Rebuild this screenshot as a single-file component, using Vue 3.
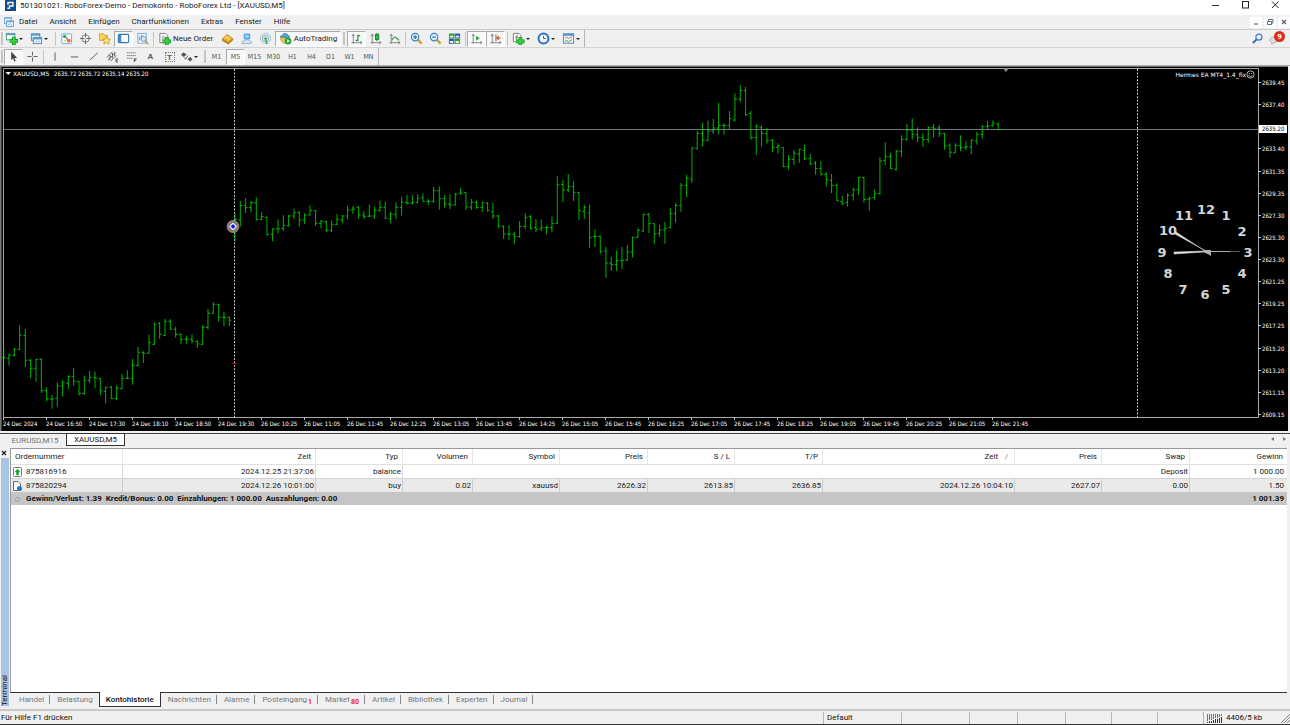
<script setup>
const menus = ['Datei', 'Ansicht', 'Einfügen', 'Chartfunktionen', 'Extras', 'Fenster', 'Hilfe']

const timeframes = ['M1', 'M5', 'M15', 'M30', 'H1', 'H4', 'D1', 'W1', 'MN']

// Bars are [high, low, open, close] in thirds of a pixel, each block with its own vertical base.
const blocks = [
  [570, [
    [468, 506, 503, 503], [490, 527, 505, 496], [474, 500, 496, 478], [406, 480, 478, 436], [417, 531, 436, 511],
    [507, 564, 511, 535], [507, 575, 535, 508], [505, 609, 508, 602], [592, 634, 602, 627], [614, 656, 627, 627],
    [577, 650, 625, 588], [570, 620, 588, 578], [556, 597, 580, 559], [534, 587, 559, 574], [573, 617, 574, 611],
    [557, 615, 611, 571], [543, 579, 571, 562], [545, 595, 562, 564], [564, 615, 565, 602], [590, 640, 604, 592],
    [588, 627, 592, 626], [586, 630, 626, 594], [552, 597, 596, 565], [541, 567, 565, 565], [507, 584, 566, 526],
    [471, 530, 526, 487], [484, 519, 487, 490], [434, 492, 490, 458], [397, 465, 463, 403], [397, 446, 400, 433],
    [387, 438, 436, 394], [388, 419, 394, 418], [410, 443, 418, 433], [430, 462, 433, 449], [437, 462, 447, 448],
    [433, 460, 448, 453], [450, 473, 455, 462], [405, 465, 463, 412], [357, 419, 412, 370], [336, 371, 370, 343],
    [342, 396, 343, 382], [366, 408, 382, 382], [380, 408, 382, 391], [70, 155, 138, 88], [33, 110, 90, 47],
    [24, 70, 47, 53], [33, 67, 53, 38], [22, 92, 38, 88], [66, 90, 88, 80], [80, 137, 82, 133],
    [115, 154, 133, 117], [88, 130, 117, 116], [76, 123, 116, 107], [75, 110, 107, 78], [56, 88, 78, 68],
    [63, 110, 68, 90], [70, 102, 90, 75], [46, 76, 75, 62], [60, 108, 62, 100]
  ]],
  [480, [
    [180, 205, 190, 184], [182, 216, 185, 211], [182, 216, 211, 193], [163, 195, 193, 178], [165, 190, 180, 168],
    [137, 179, 168, 150], [138, 162, 150, 147], [138, 177, 142, 165], [153, 177, 165, 169], [134, 171, 169, 168],
    [140, 177, 168, 151], [122, 155, 151, 142], [126, 177, 142, 175], [156, 190, 177, 163], [127, 177, 163, 142],
    [111, 167, 142, 127], [105, 133, 127, 130], [105, 133, 130, 127], [103, 130, 127, 115], [101, 125, 113, 124],
    [117, 135, 124, 124], [81, 128, 124, 92], [79, 149, 92, 116], [105, 143, 116, 132], [103, 147, 132, 135],
    [99, 137, 135, 103], [83, 104, 101, 99], [97, 150, 98, 141], [117, 150, 141, 127], [122, 147, 127, 142],
    [125, 156, 142, 127], [126, 155, 130, 151], [129, 177, 155, 168], [165, 205, 168, 197], [196, 237, 199, 222],
    [196, 240, 222, 223], [215, 253, 223, 230], [183, 233, 230, 199], [159, 208, 199, 172], [165, 208, 170, 205],
    [177, 216, 203, 208], [179, 213, 207, 202], [197, 223, 203, 202], [170, 216, 203, 191], [48, 192, 190, 74],
    [59, 126, 73, 90], [42, 96, 90, 79], [63, 123, 79, 97], [96, 180, 97, 151], [134, 177, 154, 142],
    [134, 263, 159, 232], [208, 261, 230, 229], [227, 281, 229, 275], [261, 354, 273, 309], [290, 333, 309, 314],
    [272, 333, 314, 302], [261, 327, 303, 301], [255, 303, 300, 276]
  ]],
  [210, [
    [500, 563, 546, 502], [474, 503, 502, 481], [430, 486, 483, 433], [429, 489, 433, 461], [460, 523, 461, 492],
    [465, 500, 490, 480], [456, 521, 480, 475], [414, 475, 473, 430], [399, 458, 430, 406], [339, 426, 406, 346],
    [315, 381, 346, 325], [232, 339, 327, 234], [183, 239, 235, 190], [158, 230, 190, 211], [152, 213, 211, 183],
    [147, 192, 183, 174], [99, 192, 174, 166], [160, 194, 166, 167], [123, 180, 166, 146], [71, 155, 150, 87],
    [45, 96, 87, 62], [51, 137, 62, 134], [123, 209, 130, 203], [162, 255, 203, 170], [165, 230, 173, 190],
    [174, 221, 191, 211], [207, 247, 211, 232], [220, 251, 232, 228], [231, 291, 233, 290], [255, 299, 290, 268],
    [240, 285, 268, 250], [237, 279, 252, 238], [225, 270, 241, 266], [252, 285, 266, 282], [273, 314, 280, 296],
    [273, 317, 296, 313], [306, 350, 314, 329], [312, 369, 331, 346], [340, 395, 346, 391], [378, 406, 395, 401],
    [370, 410, 398, 376], [353, 392, 375, 359], [321, 375, 358, 323], [321, 398, 322, 388], [380, 422, 388, 384],
    [358, 389, 382, 371], [261, 374, 371, 273], [217, 285, 272, 260], [249, 297, 260, 296], [240, 302, 298, 243],
    [196, 261, 244, 208], [162, 212, 208, 180], [146, 209, 180, 193], [172, 217, 194, 202], [190, 231, 203, 209],
    [169, 219, 208, 173], [162, 203, 173, 176], [165, 201, 174, 191], [189, 239, 191, 228], [220, 263, 226, 247],
    [220, 249, 248, 226], [196, 243, 227, 232], [214, 240, 233, 230], [208, 252, 231, 211], [186, 224, 213, 193],
    [165, 206, 193, 170], [153, 178, 169, 168], [151, 170, 167, 159], [159, 180, 162, 179]
  ]]
]

const chartTop = 66
const barStep = 16.13
let index = 0
let barPath = ''
for (const [base, bars] of blocks) {
  for (const [high, low, open, close] of bars) {
    const x = Math.round(11 + barStep * index)
    const y = (v) => v + base - chartTop * 3
    barPath += `M${x} ${y(high)}V${y(low)}M${x - 6} ${y(open)}H${x}M${x} ${y(close)}H${x + 6}`
    index += 1
  }
}

const prices = ['2639.45', '2637.40', '2635.40', '2633.40', '2631.35', '2629.35', '2627.30', '2625.30', '2623.30',
  '2621.25', '2619.25', '2617.25', '2615.20', '2613.20', '2611.15', '2609.15']
const priceAxis = prices.map((label, i) => ({ label, y: Math.round(17 + i * 22.13) })).filter((p) => p.label !== '2635.40')

const times = ['24 Dec 2024', '24 Dec 16:50', '24 Dec 17:30', '24 Dec 18:10', '24 Dec 18:50', '24 Dec 19:30',
  '26 Dec 10:25', '26 Dec 11:05', '26 Dec 11:45', '26 Dec 12:25', '26 Dec 13:05', '26 Dec 13:45', '26 Dec 14:25',
  '26 Dec 15:05', '26 Dec 15:45', '26 Dec 16:25', '26 Dec 17:05', '26 Dec 17:45', '26 Dec 18:25', '26 Dec 19:05',
  '26 Dec 19:45', '26 Dec 20:25', '26 Dec 21:05', '26 Dec 21:45']
const timeAxis = times.map((label, i) => ({ label, x: 3 + i * 43 }))

const clock = [
  [12, 1206, 143], [1, 1226, 149], [2, 1242, 165], [3, 1248, 186], [4, 1242, 207], [5, 1226, 223],
  [6, 1205, 228], [7, 1183, 223], [8, 1168, 207], [9, 1162, 186], [10, 1168, 164], [11, 1184, 149]
]

const columns = ['Ordernummer', 'Zeit', 'Typ', 'Volumen', 'Symbol', 'Preis', 'S / L', 'T/P', 'Zeit', 'Preis', 'Swap', 'Gewinn']
const trade = ['2024.12.26 10:01:00', 'buy', '0.02', 'xauusd', '2626.32', '2613.85', '2636.85', '2024.12.26 10:04:10', '2627.07', '0.00', '1.50']

const terminalTabs = [
  { label: 'Handel' }, { label: 'Belastung' }, { label: 'Kontohistorie', active: true }, { label: 'Nachrichten' },
  { label: 'Alarme' }, { label: 'Posteingang', badge: '1' }, { label: 'Market', badge: '80' }, { label: 'Artikel' },
  { label: 'Bibliothek' }, { label: 'Experten' }, { label: 'Journal' }
]

const toolGroups = [
  { tools: [{ icon: 'newchart', label: 'Neuer Chart', drop: true }, { icon: 'profiles', label: 'Profile', drop: true }] },
  { tools: [
    { icon: 'market', label: 'Marktübersicht' }, { icon: 'target', label: 'Datenfenster' },
    { icon: 'favorites', label: 'Navigator' }, { icon: 'panel', label: 'Terminal', on: true },
    { icon: 'tester', label: 'Strategietester' }] },
  { tools: [
    { icon: 'order', label: 'Neue Order', text: 'Neue Order', cls: 'order' }, { icon: 'book', label: 'MetaEditor' },
    { icon: 'user', label: 'MQL5 Community' }, { icon: 'signal', label: 'Signale' },
    { icon: 'auto', label: 'AutoTrading', text: 'AutoTrading', cls: 'auto', on: true }] },
  { grip: true, tools: [
    { icon: 'bars', label: 'Balkenchart', on: true }, { icon: 'candles', label: 'Kerzenchart' }, { icon: 'line', label: 'Linienchart' }] },
  { tools: [{ icon: 'zoomin', label: 'Vergrößern' }, { icon: 'zoomout', label: 'Verkleinern' }, { icon: 'tile', label: 'Fenster anordnen' }] },
  { tools: [{ icon: 'scroll', label: 'Automatisch scrollen', on: true }, { icon: 'shift', label: 'Chartverschiebung', on: true }] },
  { wide: true, tools: [
    { icon: 'indicators', label: 'Indikatoren', drop: true }, { icon: 'period', label: 'Perioden', drop: true },
    { icon: 'template', label: 'Vorlagen', drop: true, cls: 'last' }] }
]

const drawGroups = [
  [{ icon: 'cursor', label: 'Cursor', on: true }, { icon: 'cross', label: 'Fadenkreuz' }],
  [{ icon: 'vline', label: 'Vertikale Linie' }, { icon: 'hline', label: 'Horizontale Linie' },
    { icon: 'trend', label: 'Trendlinie' }, { icon: 'channel', label: 'Kanal' }, { icon: 'fibo', label: 'Fibonacci' },
    { glyph: 'A', label: 'Text' }, { glyph: 'T', boxed: true, label: 'Textlabel' }, { icon: 'arrows', label: 'Pfeile', drop: true }]
]
</script>

<template>
  <div class="app">
    <svg class="defs" aria-hidden="true">
      <symbol id="newchart" viewBox="0 0 14 14">
        <rect x="1.5" y="1.5" width="9" height="7" fill="#fff" stroke="#4f9a6c" /><path d="M1 2.5H11" stroke="#5c9cc8" stroke-width="2" />
        <path d="M9.500 5V14M5 9.500H14" stroke="#0a8a1c" stroke-width="4" /><path d="M9.500 5.500V13.500M5.500 9.500H13.500" stroke="#35d23d" stroke-width="2.400" />
      </symbol>
      <symbol id="profiles" viewBox="0 0 14 14">
        <rect x="1.500" y="2" width="9" height="7" fill="#e5f1fb" stroke="#4585ba" /><path d="M1 3H11" stroke="#5b9ace" stroke-width="2" />
        <rect x="3.500" y="6" width="9" height="6.500" fill="#e5f1fb" stroke="#4585ba" /><path d="M3 7H13" stroke="#5b9ace" stroke-width="2" /><path d="M5 10H11" stroke="#a9c8e2" />
      </symbol>
      <symbol id="market" viewBox="0 0 14 14">
        <rect x="2" y="2" width="10.500" height="10.500" rx="1" fill="#fff" stroke="#69a8d8" />
        <circle cx="5" cy="4.800" r="1.800" fill="#28aa3f" /><circle cx="7.500" cy="7" r="1.300" fill="#8aa6cf" /><circle cx="9.500" cy="9.300" r="2" fill="#e8673c" /><circle cx="5.500" cy="9.500" r="1" fill="#e9a93c" />
      </symbol>
      <symbol id="target" viewBox="0 0 14 14">
        <circle cx="7" cy="7" r="4" fill="none" stroke="#777" /><path d="M7 1V6M7 8V13M1 7H6M8 7H13" stroke="#666" />
      </symbol>
      <symbol id="favorites" viewBox="0 0 14 14">
        <path d="M1.500 2H6L7 3.500H10V9H1.500Z" fill="#f9d65c" stroke="#c99a29" stroke-width=".8" />
        <path d="M9 4.500L10.500 7.500L13.500 8L11.400 10L12 13L9 11.500L6.200 13L6.800 10L4.700 8L7.700 7.500Z" fill="#ffe268" stroke="#bd8b22" stroke-width=".8" />
      </symbol>
      <symbol id="panel" viewBox="0 0 14 14">
        <rect x="1.500" y="2.500" width="11" height="9" rx="1" fill="#f7fbff" stroke="#3877b6" stroke-width="1.200" /><rect x="2" y="3" width="2.500" height="8" fill="#3d86ce" />
      </symbol>
      <symbol id="tester" viewBox="0 0 14 14">
        <rect x="2" y="1.500" width="9" height="10.500" fill="#eef6fc" stroke="#7ba8cb" /><path d="M4 9V5M6 8V3M8 6V4" stroke="#4c80ac" />
        <circle cx="8.200" cy="7.500" r="2.600" fill="#d7ecf9" stroke="#6995b8" /><path d="M10 9.500L13 13" stroke="#c39a3c" stroke-width="1.600" />
      </symbol>
      <symbol id="order" viewBox="0 0 14 14">
        <path d="M2 1.500H8L10.500 4V11.500H2Z" fill="#fff" stroke="#777" /><path d="M4 4.500H7M4 6.500H8M4 8.500H6" stroke="#888" />
        <path d="M9.500 5.500V14.500M5 10H14" stroke="#0b8f1c" stroke-width="4" /><path d="M9.500 6V14M5.500 10H13.500" stroke="#2fd238" stroke-width="2.400" />
      </symbol>
      <symbol id="book" viewBox="0 0 14 14">
        <path d="M1.500 7.500L6.500 2.500L12.500 7L8 11.500Z" fill="#f0bd3e" stroke="#b27b17" stroke-width=".8" /><path d="M1.500 7.500V9.500L8 13L12.500 9V7L8 11.500Z" fill="#c88e20" stroke="#9b6a12" stroke-width=".6" /><path d="M5 5L9 8" stroke="#fbe08c" />
      </symbol>
      <symbol id="user" viewBox="0 0 14 14">
        <rect x="4" y="1.500" width="7" height="6.500" rx="1.500" fill="#4da0ea" /><rect x="5.500" y="3" width="4" height="3.500" fill="#9dd0f7" />
        <path d="M2 12.500C1 10 4 9 5 9.500C6 7.500 10 8 10 9.500C13 9.500 13 12.500 11.500 12.500Z" fill="#d8e7f3" stroke="#7fa3c2" stroke-width=".8" />
      </symbol>
      <symbol id="signal" viewBox="0 0 14 14" fill="none">
        <circle cx="7" cy="7" r="5.500" stroke="#9dbdcf" /><circle cx="7" cy="7" r="3.300" stroke="#6f9fba" /><circle cx="7" cy="7" r="1.300" fill="#37a546" /><path d="M7 7L8.500 13" stroke="#48a556" stroke-width="1.600" />
      </symbol>
      <symbol id="auto" viewBox="0 0 14 14">
        <path d="M1.500 5.500C1.500 8.500 3 12 6.500 12.500C9.500 12 11 8.500 11 5.500Z" fill="#f1c84a" stroke="#b58f2c" stroke-width=".7" /><path d="M1 5C4 6.500 9 6.500 12 5C10 4.500 9.500 1.500 6.500 1.500S3.500 4.500 1 5Z" fill="#55a2d2" stroke="#347da8" stroke-width=".7" />
        <circle cx="9.800" cy="9.800" r="3.600" fill="#1fa53a" /><path d="M8.700 7.900L11.900 9.800L8.700 11.700Z" fill="#fff" />
      </symbol>
      <symbol id="bars" viewBox="0 0 14 14" fill="none">
        <path d="M3.500 2V12.500M1.500 11.500H13M2 4.500L3.500 2.500L5 4.500M11 10L13 11.500L11 13" stroke="#777" stroke-width=".9" /><path d="M8.500 3V10M8.500 4H11M6 9H8.500" stroke="#179b33" stroke-width="1.300" />
      </symbol>
      <symbol id="candles" viewBox="0 0 14 14" fill="none">
        <path d="M3.500 2V12.500M1.500 11.500H13M2 4.500L3.500 2.500L5 4.500M11 10L13 11.500L11 13" stroke="#777" stroke-width=".9" /><path d="M8.500 1V10" stroke="#11832a" /><rect x="7" y="2.500" width="3.500" height="5.500" fill="#28c33c" stroke="#11832a" />
      </symbol>
      <symbol id="line" viewBox="0 0 14 14" fill="none">
        <path d="M3.500 2V12.500M1.500 11.500H13M2 4.500L3.500 2.500L5 4.500M11 10L13 11.500L11 13" stroke="#777" stroke-width=".9" /><path d="M4 9C6 5 8 5 9 6.500L12 9" stroke="#38a04c" stroke-width="1.200" />
      </symbol>
      <symbol id="zoomin" viewBox="0 0 14 14">
        <path d="M8.500 8.500L12.500 12.500" stroke="#caa02e" stroke-width="2.400" /><circle cx="5.500" cy="5.500" r="4" fill="#d9efff" stroke="#3b83c0" stroke-width="1.200" /><path d="M5.500 3.500V7.500M3.500 5.500H7.500" stroke="#2369a8" stroke-width="1.200" />
      </symbol>
      <symbol id="zoomout" viewBox="0 0 14 14">
        <path d="M8.500 8.500L12.500 12.500" stroke="#caa02e" stroke-width="2.400" /><circle cx="5.500" cy="5.500" r="4" fill="#d9efff" stroke="#3b83c0" stroke-width="1.200" /><path d="M3.500 5.500H7.500" stroke="#2369a8" stroke-width="1.200" />
      </symbol>
      <symbol id="tile" viewBox="0 0 14 14">
        <path d="M1 1.500H6.800V7H1ZM7.200 7.200H13V13H7.200Z" fill="#2f9c2a" /><path d="M7.200 1.500H13V7H7.200ZM1 7.200H6.800V13H1Z" fill="#2a5fc0" />
        <path d="M2 4H5.800V6H2ZM8.200 4H12V6H8.200ZM2 9.700H5.800V12H2ZM8.200 9.700H12V12H8.200Z" fill="#e6f2e6" />
      </symbol>
      <symbol id="scroll" viewBox="0 0 14 14" fill="none">
        <path d="M3.500 2V12.500M1.500 11.500H13M2 4.500L3.500 2.500L5 4.500M11 10L13 11.500L11 13" stroke="#777" stroke-width=".9" /><path d="M6.500 4L10.500 6.700L6.500 9.500Z" fill="#21ab39" />
      </symbol>
      <symbol id="shift" viewBox="0 0 14 14" fill="none">
        <path d="M3.500 2V12.500M1.500 11.500H13M2 4.500L3.500 2.500L5 4.500M11 10L13 11.500L11 13" stroke="#777" stroke-width=".9" /><path d="M7.500 2.500V10" stroke="#555" /><path d="M12.500 6.500H9M10.500 4.500L8.500 6.500L10.500 8.500" stroke="#d14a1d" stroke-width="1.200" />
      </symbol>
      <symbol id="indicators" viewBox="0 0 14 14">
        <path d="M1.500 1.500H7.500L9.500 3.500V10.500H1.500Z" fill="#fff" stroke="#777" /><path d="M6.500 3.500C4.500 3 5 6 4.500 8.500M3.500 5.500H6.500" stroke="#666" fill="none" />
        <path d="M9 5.500V14.500M4.500 10H13.500" stroke="#0b8f1c" stroke-width="4" /><path d="M9 6V14M5 10H13" stroke="#2fd238" stroke-width="2.400" />
      </symbol>
      <symbol id="period" viewBox="0 0 14 14">
        <circle cx="7" cy="7" r="5.300" fill="#f3f9ff" stroke="#2b72c4" stroke-width="2.200" /><path d="M7 4V7H9.500" fill="none" stroke="#555" />
      </symbol>
      <symbol id="template" viewBox="0 0 14 14">
        <rect x="1.500" y="2" width="11" height="10" fill="#f2f8fd" stroke="#4783b5" /><path d="M1 3H13" stroke="#4a8fcf" stroke-width="2" />
        <path d="M3 7L5 5.500L7 7L11 5" fill="none" stroke="#c46a4c" /><path d="M3 10L5 9L7 10.500L11 8" fill="none" stroke="#3d9a55" />
      </symbol>
      <symbol id="cursor" viewBox="0 0 14 14"><path d="M4.500 1.500V11L6.500 9L8 12.500L9.500 11.800L8 8.500H11Z" fill="#444" /></symbol>
      <symbol id="cross" viewBox="0 0 14 14"><path d="M7 2V6M7 8V12.500M1.500 7H6M8 7H12.500" stroke="#555" /></symbol>
      <symbol id="vline" viewBox="0 0 14 14"><path d="M6.500 2.500V11.500" stroke="#555" /></symbol>
      <symbol id="hline" viewBox="0 0 14 14"><path d="M3 7.500H11" stroke="#555" /></symbol>
      <symbol id="trend" viewBox="0 0 14 14"><path d="M3 11L11.500 3" stroke="#555" /></symbol>
      <symbol id="channel" viewBox="0 0 14 14" fill="none">
        <path d="M1 8L7 2M2 11L10 3M5 12L11 6M3 5L6 8M6 3L9 6M4 7V11M7 4V9M9.500 2V6" stroke="#555" stroke-width=".9" /><path d="M13 9.500H10.800V13H13M11 11.200H12.700" stroke="#444" stroke-width=".9" />
      </symbol>
      <symbol id="fibo" viewBox="0 0 14 14" fill="none">
        <path d="M2 3H12M2 6H12M2 9H9" stroke="#777" stroke-dasharray="1.500 .5" /><path d="M12.500 9.500H10V13M10 11.200H12" stroke="#444" />
      </symbol>
      <symbol id="arrows" viewBox="0 0 14 14"><path d="M1 5L4 2.500L7 5L4 7.500Z" fill="#555" /><path d="M8 10L11 7.500L13.500 10L11 12.500Z" fill="#555" /><path d="M4.500 8L6 10L8.500 6" fill="none" stroke="#555" /></symbol>
    </svg>

    <header class="title">
      <svg class="logo" viewBox="0 0 11 11"><rect width="11" height="11" fill="#134b8d" /><path d="M3 9V7.500M3 5V2.500H8V6H4.500V9" fill="none" stroke="#fff" stroke-width="1.300" /></svg>
      <h1>501301021: RoboForex-Demo - Demokonto - RoboForex Ltd - [XAUUSD,M5]</h1>
      <div class="window-buttons">
        <button aria-label="Minimieren"><svg viewBox="0 0 10 10"><path d="M2 5.500H9" stroke="#333" /></svg></button>
        <button aria-label="Maximieren"><svg viewBox="0 0 10 10"><rect x="2.500" y="1.500" width="6" height="6.500" fill="none" stroke="#222" /></svg></button>
        <button aria-label="Schließen"><svg viewBox="0 0 10 10"><path d="M2 1.500L8.500 8M8.500 1.500L2 8" stroke="#222" /></svg></button>
      </div>
    </header>

    <nav class="menu">
      <svg class="mdi-icon" viewBox="0 0 12 12"><rect x="1.500" y="1.500" width="7" height="6" fill="#e5f1fb" stroke="#7db0da" /><path d="M1 2H9" stroke="#7db0da" stroke-width="1.500" /><rect x="3.500" y="5" width="7" height="5.500" fill="#eef7ff" stroke="#6ba5d6" /><path d="M3 5.500H11" stroke="#6ba5d6" stroke-width="1.500" /><path d="M5 9L7 7.500L9 9" fill="none" stroke="#8ab6da" /></svg>
      <button v-for="m in menus" :key="m">{{ m }}</button>
      <div class="mdi-buttons">
        <button aria-label="Chart minimieren"><svg viewBox="0 0 8 8"><path d="M2 6H6" stroke="#5b6b7b" stroke-width="1.200" /></svg></button>
        <button aria-label="Chart wiederherstellen"><svg viewBox="0 0 8 8"><path d="M2.500 3V1.500H7V5H5.500M1.500 3.500H5.500V6.500H1.500Z" fill="none" stroke="#5b6b7b" /></svg></button>
        <button aria-label="Chart schließen"><svg viewBox="0 0 8 8"><path d="M2 2L6 6M6 2L2 6" stroke="#5b6b7b" stroke-width="1.300" /></svg></button>
      </div>
    </nav>

    <div class="toolbars">
      <div class="bar first">
        <span class="grip"></span>
        <template v-for="(g, i) in toolGroups" :key="i">
          <span v-if="g.grip" class="grip spaced"></span>
          <span v-else-if="i" class="sep" :class="{ wide: g.wide }"></span>
          <button v-for="t in g.tools" :key="t.icon" class="tool" :class="[t.cls, { on: t.on, drop: t.drop }]" :aria-label="t.label">
            <svg class="icon"><use :href="'#' + t.icon" /></svg><span v-if="t.text">{{ t.text }}</span><i v-if="t.drop" class="caret"></i>
          </button>
        </template>
        <span class="bar-end"></span>
        <div class="right">
          <button class="tool" aria-label="Suche"><svg class="icon" viewBox="0 0 14 14"><path d="M2 12L6 8" stroke="#2862bb" stroke-width="2" /><circle cx="8.500" cy="5.500" r="3.300" fill="#eaf3ff" stroke="#3e7bd0" stroke-width="1.300" /></svg></button>
          <button class="tool notes" aria-label="Benachrichtigungen"><svg class="icon" viewBox="0 0 14 14"><path d="M1 8.500C1 5 8 4 9 8C9.500 11 6 11.500 5 11.500L3 13.500V11.500C1.500 11 1 10 1 8.500Z" fill="#dcdcdc" stroke="#a5a5a5" stroke-width=".8" /></svg><span class="count">9</span></button>
        </div>
      </div>
      <div class="bar second">
        <span class="grip"></span>
        <template v-for="(g, i) in drawGroups" :key="i">
          <span v-if="i" class="sep mid"></span>
          <button v-for="t in g" :key="t.label" class="tool" :class="{ on: t.on, drop: t.drop }" :aria-label="t.label">
            <span v-if="t.glyph" class="glyph" :class="{ boxed: t.boxed }">{{ t.glyph }}</span>
            <svg v-else class="icon"><use :href="'#' + t.icon" /></svg><i v-if="t.drop" class="caret"></i>
          </button>
        </template>
        <span class="grip tight"></span>
        <button v-for="t in timeframes" :key="t" class="tool tf" :class="{ on: t === 'M5' }">{{ t }}</button>
        <span class="bar-end"></span>
      </div>
    </div>

    <main class="chart">
      <svg viewBox="0 0 1290 367" role="img" aria-label="XAUUSD,M5">
        <rect width="1290" height="367" fill="#f0f0f0" />
        <rect x="0" y="0" width="1288" height="365" fill="#000" />
        <path d="M0 .5H1288M.5 0V365" stroke="#777" />
        <path d="M1.500 1V365" stroke="#444" />
        <path d="M3.500 351.500V2.500H1258.500V351.500Z" fill="none" stroke="#a9a9a9" />
        <path d="M234.500 3V351M1137.500 3V351" stroke="#c8c8c8" stroke-dasharray="2 1.400" />
        <path d="M4 63.500H1258" stroke="#707780" />
        <g transform="scale(.3333)"><path :d="barPath" fill="none" stroke="#00e000" stroke-width="2.400" /></g>
        <path d="M232 297.500H237" stroke="#b00000" />
        <path d="M1003 2H1009L1006 6Z" fill="#8796a5" />
        <circle cx="233" cy="160.500" r="5.300" fill="#333" stroke="#92827a" stroke-width="2.200" />
        <circle cx="233" cy="160.500" r="4" fill="#8b8078" />
        <path d="M233 156.500L237 160.500L233 164.500L229 160.500Z" fill="#fff" /><path d="M233 158L235.500 160.500L233 163L230.500 160.500Z" fill="#1519f0" />
        <path d="M5.500 6H11L8.200 9Z" fill="#fff" />
        <g class="small">
          <text x="13" y="10" class="head">XAUUSD,M5</text>
          <text x="54" y="10">2635.72 2635.72 2635.14 2635.20</text>
          <text x="1246" y="11" text-anchor="end" class="head">Hermes EA MT4_1.4_fix</text>
          <template v-for="p in priceAxis" :key="p.label">
            <path :d="`M1258 ${p.y - 0.5}H1261`" stroke="#ccc" /><text x="1262" :y="p.y + 2">{{ p.label }}</text>
          </template>
          <template v-for="t in timeAxis" :key="t.label">
            <path :d="`M${t.x + 0.5} 351V354`" stroke="#bbb" /><text :x="t.x" y="360">{{ t.label }}</text>
          </template>
          <rect x="1259" y="59" width="28" height="8" fill="#fff" /><text x="1262" y="65" class="now">2635.20</text>
        </g>
        <g fill="none" stroke="#ddd" stroke-width=".8"><circle cx="1250.500" cy="8.500" r="3.600" /><path d="M1248.500 9.500Q1250.500 12 1252.500 9.500M1249.300 7V8M1251.700 7V8" /></g>
        <g class="clock">
          <text v-for="c in clock" :key="c[0]" :x="c[1]" :y="c[2] + 5" text-anchor="middle">{{ c[0] }}</text>
        </g>
        <path d="M1211 189L1176 166L1175 168L1206 185L1174 186V188L1204 186Z" fill="#e2e2e2" stroke="#e2e2e2" stroke-width=".5" /><path d="M1203 184H1211V190Z" fill="#b0b0b0" />
        <path d="M1208 185.500H1230" stroke="#aaa" /><path d="M1230 185.500H1240" stroke="#555" />
      </svg>
    </main>

    <div class="chart-tabs">
      <button>EURUSD,M15</button><button class="active">XAUUSD,M5</button>
      <div class="arrows"><button aria-label="Zurück"><i class="left"></i></button><button aria-label="Weiter"><i></i></button></div>
    </div>

    <section class="terminal">
      <aside>
        <button aria-label="Terminal schließen"><svg viewBox="0 0 8 8"><path d="M2 2L6 6M6 2L2 6" stroke="#222" stroke-width="1.300" /></svg></button>
        <div class="strip"><span>Terminal</span></div>
      </aside>
      <div class="panel">
        <div class="table-area">
          <table>
            <colgroup><col v-for="(c, i) in columns" :key="i" :class="'c' + i"></colgroup>
            <thead><tr><th v-for="(c, i) in columns" :key="i">{{ c }}<small v-if="i === 8">/</small></th></tr></thead>
            <tbody>
              <tr class="balance">
                <td><span class="id"><svg viewBox="0 0 9 10"><rect x=".5" y=".5" width="8" height="9" rx="1" fill="#fff" stroke="#777" /><path d="M4.500 2L7 5H5.500V8H3.500V5H2Z" fill="#16a22a" stroke="#16a22a" stroke-width=".5" /></svg>875816916</span></td>
                <td>2024.12.25 21:37:06</td><td>balance</td><td colspan="8">Deposit</td><td>1 000.00</td>
              </tr>
              <tr class="trade">
                <td><span class="id"><svg viewBox="0 0 9 10"><path d="M.5 .5H5L7.500 3V9.500H.5Z" fill="#fff" stroke="#666" /><circle cx="6.500" cy="7.500" r="2.500" fill="#1d78d0" /></svg>875820294</span></td>
                <td v-for="(v, i) in trade" :key="i">{{ v }}</td>
              </tr>
              <tr class="total">
                <td colspan="11"><span class="id"><svg viewBox="0 0 9 10"><circle cx="4.500" cy="5.500" r="2" fill="#ccc" stroke="#999" /></svg>Gewinn/Verlust: 1.39&#160; Kredit/Bonus: 0.00&#160; Einzahlungen: 1 000.00&#160; Auszahlungen: 0.00</span></td>
                <td>1 001.39</td>
              </tr>
            </tbody>
          </table>
        </div>
        <div class="terminal-tabs">
          <button v-for="t in terminalTabs" :key="t.label" :class="{ active: t.active }">{{ t.label }}<sub v-if="t.badge">{{ t.badge }}</sub></button>
        </div>
      </div>
    </section>

    <footer class="status">
      <span class="help">Für Hilfe F1 drücken</span>
      <span class="w78">Default</span><span class="w68"></span><span class="w48"></span><span class="w48"></span><span class="w46"></span><span class="w46"></span><span class="w46"></span>
      <span class="traffic">
        <svg viewBox="0 0 16 9" shape-rendering="crispEdges"><path d="M.5 0V7M2.500 0V6M4.500 0V6M6.500 0V5M8.500 0V4M10.500 0V4M12.500 0V3M14.500 0V2" stroke="#6f8a1c" /><path d="M.5 8V9M2.500 7V9M4.500 7V9M6.500 6V9M8.500 5V9M10.500 5V9M12.500 4V9M14.500 3V9" stroke="#123f66" /></svg>4406/5 kb
        <svg class="resize" viewBox="0 0 9 9"><path d="M0 9L9 0M3 9L9 3M6 9L9 6" stroke="#888" /></svg>
      </span>
    </footer>
  </div>
</template>

<style>
body { margin: 0; background: #f0f0f0; }
</style>

<style scoped>
.app { display: flex; flex-direction: column; min-height: 100vh; box-sizing: border-box; border-bottom: 1px solid #333; background: #f0f0f0; color: #222; font: 8px/12px Roboto, "Open Sans", sans-serif; }
button { margin: 0; padding: 0; border: 0; background: none; color: inherit; font: inherit; white-space: nowrap; }
.defs { display: block; width: 0; height: 0; position: absolute; }
.title { display: flex; align-items: flex-start; height: 15px; background: #fff; }
.logo { width: 11px; height: 11px; margin-left: 5px; }
.title h1 { margin: 0 0 0 4px; flex: 1; font-size: 8px; line-height: 11px; font-weight: 400; white-space: nowrap; }
.window-buttons { display: flex; }
.window-buttons button { width: 30px; height: 10px; }
.window-buttons svg { display: block; width: 10px; height: 10px; margin: 0 auto; }
.menu { display: flex; align-items: center; height: 14px; border-bottom: 1px solid #c9c9c9; }
.mdi-icon { width: 12px; height: 12px; margin: 0 4px 0 3px; }
.menu > button { margin-right: 12px; }
.mdi-buttons { display: flex; gap: 2px; margin-left: auto; }
.mdi-buttons button { width: 12px; height: 11px; background: #fff; }
.mdi-buttons svg { display: block; width: 8px; height: 8px; margin: 1px auto; }
.toolbars { border-bottom: 1px solid #aaa; }
.bar { display: flex; align-items: center; height: 18px; box-sizing: border-box; }
.bar.first { border-bottom: 1px solid #d4d4d4; }
.bar.second { height: 17px; }
.grip { width: 2px; height: 13px; margin: 0 1px; box-sizing: border-box; border: solid #c4c4c4; border-width: 0 1px 0 1px; }
.grip.spaced { margin: 0 2px; }
.grip.tight { margin: 0 1px 0 0; }
.sep { width: 1px; height: 14px; margin: 0 1px; background: #c4c4c4; }
.sep.wide { margin: 0 3px 0 2px; }
.sep.mid { margin: 0 2px 0 1px; }
.bar-end { width: 1px; height: 100%; background: #b5b5b5; }
.tool { display: flex; align-items: center; justify-content: center; width: 19px; height: 16px; box-sizing: border-box; border: 1px solid transparent; }
.tool.on { border-color: #aaa #fff #fff #aaa; background: #f8f8f8; }
.icon { display: block; flex: none; width: 13px; height: 13px; overflow: visible; }
.tool.drop { width: 25px; justify-content: flex-start; gap: 1px; }
.tool.drop.last { width: 23px; }
.caret { border: 2px solid transparent; border-top-color: #222; border-bottom: 0; }
.tool.order { width: 63px; justify-content: flex-start; padding-left: 2px; gap: 2px; }
.tool.auto { width: 66px; gap: 2px; }
.tool.tf { color: #555; font: 7px/12px "DejaVu Sans Condensed", "DejaVu Sans", sans-serif; }
.right { display: flex; gap: 1px; margin-left: auto; }
.tool.notes { position: relative; width: 22px; justify-content: flex-start; }
.count { position: absolute; top: -1px; right: 4px; width: 11px; height: 11px; border-radius: 50%; background: #dd2d1b; color: #fff; line-height: 11px; font-weight: 700; }
.glyph { color: #555; font: 700 8px/10px "Liberation Sans", sans-serif; }
.glyph.boxed { width: 8px; height: 8px; border: 1px dotted #777; line-height: 9px; text-align: center; }
.chart svg { display: block; width: 100%; height: auto; }
.small { font: 6px "DejaVu Sans Condensed", "DejaVu Sans", sans-serif; fill: #fff; }
.small .head { font-family: "DejaVu Sans", sans-serif; }
.small .now { fill: #000; }
.clock { font: 700 13px "DejaVu Sans", sans-serif; fill: #d5d5d5; }
.chart-tabs { display: flex; height: 15px; align-items: flex-start; }
.chart-tabs > button { width: 59px; height: 13px; color: #777; box-sizing: border-box; line-height: 11px; border-top: 1px solid #444; }
.chart-tabs > button:first-child { width: 66px; padding-left: 4px; }
.chart-tabs > button.active { border: 1px solid #333; background: #fff; color: #111; }
.arrows { display: flex; flex: 1; justify-content: flex-end; border-top: 1px solid #444; }
.arrows button { width: 12px; height: 10px; display: grid; place-items: center; }
.arrows i { border: 2px solid transparent; border-left: 3px solid #777; border-right: 0; }
.arrows i.left { border-left: 0; border-right: 3px solid #777; }
.terminal { flex: 1; display: flex; }
aside { display: flex; flex-direction: column; width: 10px; }
aside button { height: 9px; }
aside button svg { display: block; width: 8px; height: 8px; }
.strip { flex: 1; display: flex; align-items: flex-end; justify-content: center; margin: 1px 1px 3px 1px; background: #a9c4e2; }
.strip span { writing-mode: vertical-rl; transform: rotate(180deg); line-height: 8px; color: #111; }
.panel { flex: 1; display: flex; flex-direction: column; min-width: 0; }
.table-area { flex: 1; margin-right: 3px; border-left: 1px solid #999; border-top: 1px solid #999; border-bottom: 1px solid #333; background: #fff; }
table { width: 100%; table-layout: fixed; border-collapse: separate; border-spacing: 0; }
.c0 { width: 112px; } .c1 { width: 193px; } .c2, .c4, .c6, .c9 { width: 87px; } .c3 { width: 70px; } .c5, .c7, .c10 { width: 88px; } .c8 { width: 192px; }
th, td { box-sizing: border-box; padding: 0 1px 0 2px; text-align: right; font-weight: 400; white-space: nowrap; border-right: 1px solid #d8d8d8; }
th { height: 16px; padding-right: 4px; border-right-color: #e6e6e6; border-bottom: 1px solid #e0e0e0; }
th:first-child { text-align: left; padding-left: 4px; }
td:first-child { text-align: left; }
th:last-child, td:last-child { border-right: 0; }
td { height: 13px; }
td:last-child { padding-right: 3px; }
.balance td { height: 14px; border-bottom: 1px solid #d4d4d4; }
.trade td { background: #eaeaea; border-right-color: #ccc; }
.total td { background: #c5c5c5; border-right: 0; font-weight: 700; color: #111; }
th small { margin: 0 2px 0 7px; font-size: 7px; color: #777; }
.id { display: flex; align-items: center; gap: 4px; }
.id svg { width: 9px; height: 10px; }
.terminal-tabs { display: flex; height: 15px; margin-bottom: 1px; }
.terminal-tabs button { position: relative; display: flex; height: 14px; box-sizing: border-box; padding: 0 6px 0 7px; line-height: 13px; color: #777; }
.terminal-tabs button:first-child { padding: 0 6px 0 9px; }
.terminal-tabs button::after { content: ""; position: absolute; right: 0; top: 2px; width: 1px; height: 9px; background: #888; }
.terminal-tabs button:nth-child(2)::after { display: none; }
.terminal-tabs button.active { margin-top: -1px; padding: 0 6px; border: 1px solid #333; border-top: 0; background: #fff; color: #111; line-height: 15px; font-weight: 500; height: 15px; }
.terminal-tabs button.active::after { display: none; }
sub { margin-left: 1px; color: #e22; font-size: 7px; line-height: 18px; font-weight: 700; vertical-align: baseline; }
.status { display: flex; height: 12px; padding-top: 1px; border-top: 2px solid #c8c8c8; line-height: 12px; color: #111; }
.status > span { box-sizing: border-box; padding-left: 3px; border-left: 1px solid #b5b5b5; white-space: nowrap; }
.status .help { flex: 1; padding-left: 1px; border-left: 0; }
.status .w78 { width: 78px; } .status .w68 { width: 68px; } .status .w48 { width: 48px; } .status .w46 { width: 46px; }
.status .traffic { display: flex; align-items: center; gap: 3px; width: 87px; }
.traffic svg { width: 16px; height: 9px; }
.traffic .resize { width: 9px; margin-left: auto; }
</style>
